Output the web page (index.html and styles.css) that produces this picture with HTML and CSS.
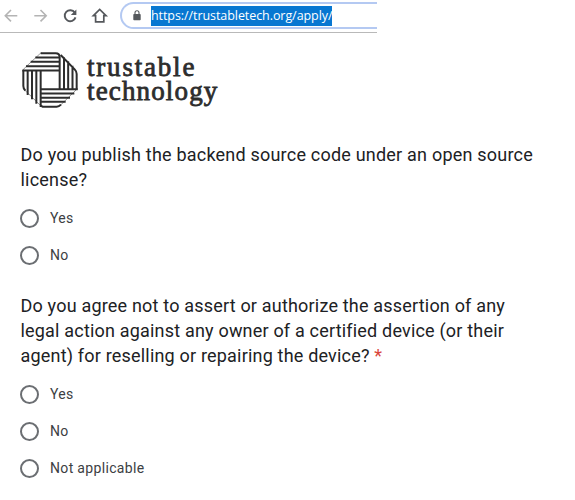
FILE: index.html
```html
<!DOCTYPE html>
<html lang="en">
<head>
<meta charset="utf-8">
<title>Trustable Technology</title>
<link rel="stylesheet" href="styles.css">
</head>
<body>
<header class="toolbar">
  <svg class="nav" viewBox="0 0 115 32" aria-hidden="true">
    <g fill="none" stroke="#b4b4b4" stroke-width="1.6">
      <path d="M17.3 15.7H5.5M11 10L5.3 15.7L11 21.4"/>
      <path d="M34.3 15.7H46M40.5 10L46.2 15.7L40.5 21.4"/>
    </g>
    <path d="M74.8 12.6A5.5 5.5 0 1 0 75.5 17.4" fill="none" stroke="#55585c" stroke-width="1.9"/>
    <path d="M76.4 9.4V15H70.8Z" fill="#55585c"/>
    <path d="M93.4 15.6L99.7 9.5L106 15.6H103.8V21.8H95.6V15.6Z" fill="none" stroke="#55585c" stroke-width="1.7"/>
  </svg>
  <div class="address">
    <svg class="lock" viewBox="0 0 8 11" aria-hidden="true">
      <path d="M2 5V2.8a2 2 0 0 1 4 0V5" fill="none" stroke="#55585c" stroke-width="1.1"/>
      <rect x="0.3" y="4" width="7.4" height="6.3" rx=".8" fill="#55585c"/>
    </svg>
    <span class="url">https://trustabletech.org/apply/</span>
  </div>
</header>
<main class="page">
  <div class="brand">
    <svg class="logo" viewBox="24 24 168 168" aria-hidden="true">
      <g fill="none" stroke="#2d2d2d" stroke-width="6">
        <path d="M80 28H125Q137 28 137 40V137M64 40.5H137M50 53.5H137M36 66.5H137M25 79.5H137"/>
        <path d="M150 40V137M162.5 52V137M175.5 65V137M188 137V90Q188 82 182 76L140 33"/>
        <path d="M80 136H191M80 148.5H181M80 161H168M80 173.5H155M80 185L86 188H128Q135 188 141 182"/>
        <path d="M80 79V189M67 79V179M54 79V166M41 79V153M28 79V126Q28 134 34 140"/>
      </g>
      <path d="M27 79Q28 76 34 70L76 31Q79 27 84 27M32 138L80 185M138 185L186 138" fill="none" stroke="#2d2d2d" stroke-width="1.5"/>
    </svg>
    <div class="wordmark"><span class="wide">trustable</span><br>technology</div>
  </div>
  <section class="question">
    <h2>Do you publish the backend source code under an open source<br>license?</h2>
    <label class="option"><i class="radio"></i><span>Yes</span></label>
    <label class="option"><i class="radio"></i><span>No</span></label>
  </section>
  <section class="question">
    <h2>Do you agree not to assert or authorize the assertion of any<br>legal action against any owner of a certified device (or their<br>agent) for reselling or repairing the device? <b class="required">*</b></h2>
    <label class="option"><i class="radio"></i><span>Yes</span></label>
    <label class="option"><i class="radio"></i><span>No</span></label>
    <label class="option"><i class="radio"></i><span>Not applicable</span></label>
  </section>
</main>
</body>
</html>
```
FILE: styles.css
```css
* { box-sizing: border-box; }
body { margin: 0; background: #fff; font-family: Roboto, "Liberation Sans", sans-serif; }
.toolbar { display: flex; width: 377px; height: 33px; border-bottom: 1px solid #b9b9b9; overflow: hidden; }
.nav { width: 115px; height: 32px; flex: none; }
.address { display: flex; align-items: center; flex: 1; height: 27px; margin: 2px 0 0 5px; padding-left: 11px; border: 2px solid #b4c9f2; border-right: 0; border-radius: 14px 0 0 14px; }
.lock { width: 8px; height: 11px; flex: none; margin-right: 10px; }
.url { width: 181px; height: 20px; line-height: 20px; background: #0877d1; color: #fff; font-family: "Open Sans", "Noto Sans", sans-serif; font-size: 12.5px; letter-spacing: -.07px; white-space: nowrap; }
.page { padding: 19px 20px 0; }
.brand { display: flex; height: 56px; padding-left: 2px; }
.logo { width: 56px; height: 56px; margin-right: 9px; }
.wordmark { font: 27px/24px "Liberation Serif", serif; letter-spacing: 1.15px; -webkit-text-stroke: .8px #2d2d2d; color: #2d2d2d; padding-top: 3px; }
.wide { letter-spacing: 1.8px; }
.question { padding-top: 34px; }
.question + .question { padding-top: 19px; }
h2 { margin: 0 0 7.5px; padding-left: .5px; font-size: 18px; font-weight: 400; line-height: 25px; color: #202124; letter-spacing: .21px; white-space: nowrap; }
.question + .question h2 { margin-bottom: 8px; letter-spacing: .19px; }
.required { font-weight: 400; color: #d9453b; }
.option { display: flex; align-items: center; height: 37px; font-size: 14px; letter-spacing: .33px; color: #3c4043; }
.radio { width: 19px; height: 19px; border: 2px solid #6b6e72; border-radius: 50%; margin-right: 11px; }
```
